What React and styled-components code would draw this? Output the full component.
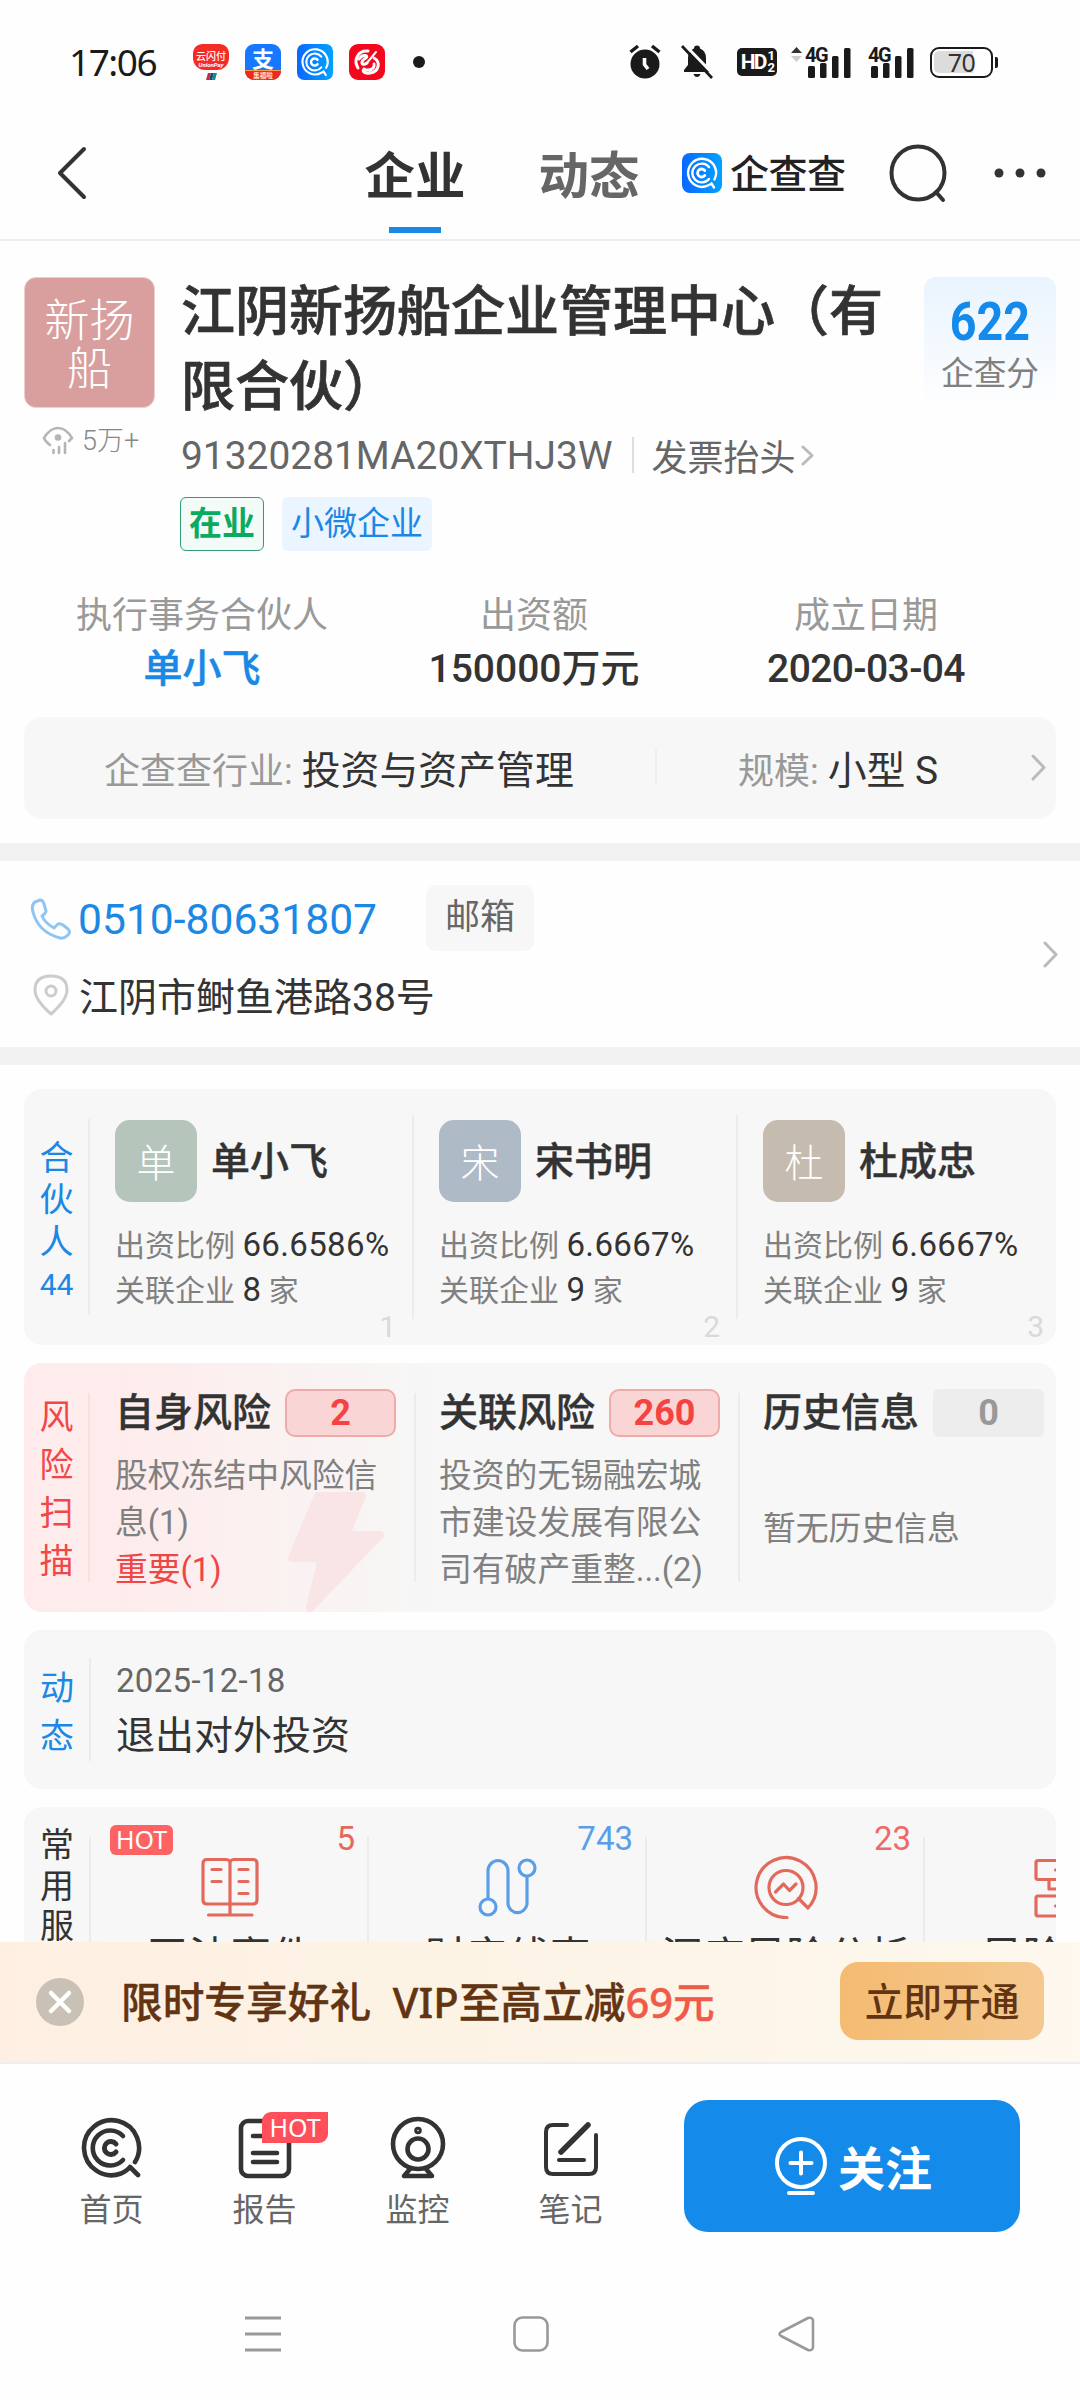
import React from "react";
import styled, { createGlobalStyle } from "styled-components";

const blue = "#1a88e4";
const ink = "#333";

const Global = createGlobalStyle`
  * { box-sizing: border-box; }
  html, body { margin: 0; padding: 0; background: #fff; }
  body { font-family: Roboto, "Noto Sans CJK SC", sans-serif; color: ${ink}; }
  svg { display: block; flex: none; }
`;

const Screen = styled.div`
  width: 1080px;
  height: 2400px;
  display: flex;
  flex-direction: column;
  overflow: hidden;
  background: #fefefe;
`;

/* ---------- status bar ---------- */
const StatusBar = styled.div`
  height: 104px;
  padding: 20px 87px 0 69px;
  display: flex;
  align-items: center;
  justify-content: space-between;
`;
const StatusGroup = styled.div`
  display: flex;
  align-items: center;
  gap: ${(p) => p.$gap || 0}px;
`;
const Clock = styled.div`
  width: 108px;
  font: 400 37px/40px "Noto Sans", Roboto, sans-serif;
  letter-spacing: -1.5px;
  color: #1a1a1a;
`;
const AppIcon = styled.div`
  width: 36px;
  height: 36px;
  border-radius: 9px;
  overflow: hidden;
  display: flex;
  flex-direction: column;
  align-items: center;
  background: ${(p) => p.$bg || "transparent"};
  color: #fff;
`;
const UnionPlate = styled.div`
  width: 36px;
  height: 26px;
  border-radius: 8px 8px 12px 12px;
  background: #f52c26;
  font: 500 10px/11px "Noto Sans CJK SC", sans-serif;
  text-align: center;
  padding-top: 6px;
`;
const UnionSub = styled.div`
  font: italic 700 6px/7px Roboto, sans-serif;
`;
const AliMark = styled.div`
  height: 26px;
  font: 700 22px/26px "Noto Sans CJK SC", sans-serif;
`;
const AliSub = styled.div`
  width: 36px;
  height: 10px;
  background: #ee2a1c;
  border-top: 1px solid #ff9a4a;
  font: 700 6.5px/8px "Noto Sans CJK SC", sans-serif;
  text-align: center;
  color: #ffe9c4;
`;
const Dot = styled.div`
  width: 12px;
  height: 12px;
  margin-left: 12px;
  border-radius: 50%;
  background: #1a1a1a;
`;
const HdBadge = styled.div`
  width: 40px;
  height: 28px;
  margin-left: 22px;
  border-radius: 5px;
  background: #1a1a1a;
  color: #fff;
  display: flex;
  align-items: center;
  justify-content: center;
  font: 700 21px/28px Roboto, sans-serif;
  letter-spacing: -1.8px;
`;
const HdNums = styled.div`
  display: flex;
  flex-direction: column;
  margin-left: 2px;
  font: 700 13px/12px Roboto, sans-serif;
`;
const Signal = styled.div`
  position: relative;
  width: 46px;
  height: 34px;
  margin-left: ${(p) => p.$ml}px;
`;
const SignalTag = styled.span`
  position: absolute;
  left: 0;
  top: 0;
  font: 700 20px/20px Roboto, sans-serif;
  letter-spacing: -1.5px;
  color: #1a1a1a;
`;
const Battery = styled.div`
  width: 63px;
  height: 31px;
  margin-left: 16px;
  border: 2.5px solid #1a1a1a;
  border-radius: 9px;
  padding: 2px;
  position: relative;
  &::before {
    content: "";
    display: block;
    width: 39px;
    height: 22px;
    border-radius: 5px 0 0 5px;
    background: #dcdcdc;
  }
  &::after {
    content: "";
    position: absolute;
    right: -7px;
    top: 8px;
    width: 3px;
    height: 11px;
    border-radius: 0 2px 2px 0;
    background: #1a1a1a;
  }
`;
const BatteryText = styled.span`
  position: absolute;
  inset: 0;
  text-align: center;
  font: 400 25px/26px "Noto Sans", sans-serif;
  letter-spacing: -0.5px;
`;

/* ---------- header ---------- */
const Header = styled.header`
  height: 137px;
  flex: none;
  border-bottom: 2px solid #eee;
  display: flex;
  align-items: flex-start;
  padding: 29px 32px 0 52px;
`;
const BackBox = styled.div`
  width: 312px;
  padding-top: 10px;
`;
const Tab = styled.div`
  width: 102px;
  margin-right: ${(p) => p.$mr || 0}px;
  display: flex;
  flex-direction: column;
  align-items: center;
  font: 700 50.5px/88px Roboto, "Noto Sans CJK SC", sans-serif;
  color: ${(p) => (p.$on ? ink : "#666")};
  white-space: nowrap;
  &::after {
    content: "";
    width: 52px;
    height: 6px;
    margin-top: 6px;
    background: ${(p) => (p.$on ? blue : "transparent")};
  }
`;
const Brand = styled.div`
  display: flex;
  align-items: center;
  height: 80px;
  margin-left: 42px;
  gap: 8px;
  font: 500 39px/76px "Noto Sans CJK SC", sans-serif;
  letter-spacing: -0.5px;
  color: #222;
`;
const BrandName = styled.span`
  margin-top: -4px;
`;
const HeadIcons = styled.div`
  display: flex;
  align-items: center;
  height: 80px;
  margin-left: auto;
  gap: 44px;
`;

/* ---------- scroll area ---------- */
const Content = styled.main`
  height: 1701px;
  flex: none;
  overflow: hidden;
`;
const Company = styled.section`
  padding: 36px 24px 0;
  height: 232px;
  display: flex;
`;
const LogoCol = styled.div`
  width: 131px;
  height: 200px;
`;
const CompanyLogo = styled.div`
  height: 131px;
  border-radius: 12px;
  border: 1px solid #ecd0d0;
  background: #d99f9f;
  color: #fff;
  padding: 16px 18px 0;
  text-align: center;
  font: 300 45px/48px "Noto Sans CJK SC", sans-serif;
`;
const Views = styled.div`
  display: flex;
  align-items: center;
  gap: 8px;
  margin: 15px 0 0 18px;
  font-weight: 300;
  font-size: 27px;
  line-height: 36px;
  color: #888;
  white-space: nowrap;
`;
const Info = styled.div`
  width: 730px;
  margin-left: 26px;
`;
const Name = styled.h1`
  margin: -2px 0 0;
  font-weight: 500;
  font-size: 54px;
  line-height: 75px;
  color: ${ink};
  -webkit-text-stroke: 0.7px ${ink};
`;
const CodeRow = styled.div`
  display: flex;
  align-items: center;
  height: 46px;
  margin-top: 7px;
  font-size: 38.9px;
  color: #666;
`;
const Vline = styled.div`
  width: 2px;
  height: ${(p) => p.$h}px;
  background: ${(p) => p.$c || "#ececec"};
  margin: ${(p) => p.$m || 0};
  flex: none;
`;
const Invoice = styled.span`
  font-size: 36px;
  margin-right: 6px;
`;
const Tags = styled.div`
  display: flex;
  gap: 18px;
  margin: 19px 0 0 -1px;
`;
const Tag = styled.div`
  height: 54px;
  padding: 0 ${(p) => (p.$green ? 8 : 9)}px;
  border-radius: 6px;
  border: ${(p) => (p.$green ? "1.5px solid #2f9d70" : "0")};
  background: ${(p) => (p.$green ? "#f3fbf8" : "#ebf5ff")};
  color: ${(p) => (p.$green ? "#0aaa60" : blue)};
  font-weight: ${(p) => (p.$green ? 700 : 400)};
  font-size: 33px;
  line-height: ${(p) => (p.$green ? 51 : 54)}px;
`;
const Score = styled.div`
  width: 132px;
  height: 132px;
  margin-left: auto;
  border-radius: 12px;
  background: linear-gradient(#e9f4ff, #fefefe);
  text-align: center;
  color: #808080;
  font-size: 32.7px;
  line-height: 44px;
  padding-top: 15px;
`;
const ScoreNum = styled.div`
  font-weight: 700;
  font-size: 53px;
  line-height: 60px;
  color: #148aeb;
  transform: scaleX(0.88);
`;
const Stats = styled.section`
  display: grid;
  grid-template-columns: repeat(3, 332px);
  padding: 116px 36px 0;
  height: 244px;
  text-align: center;
`;
const StatLabel = styled.div`
  font-size: 36px;
  line-height: 54px;
  color: #999;
`;
const StatValue = styled.div`
  font-weight: 500;
  font-size: 39px;
  line-height: 52px;
  color: ${(p) => (p.$link ? blue : ink)};
  letter-spacing: ${(p) => p.$ls || 0}px;
  -webkit-text-stroke: ${(p) => (p.$link ? 0.5 : 0)}px currentColor;
`;
const Industry = styled.section`
  margin: 0 24px;
  height: 102px;
  border-radius: 18px;
  background: #f7f7f7;
  display: flex;
  align-items: center;
  padding: 0 10px 2px 80px;
  color: #999;
  font-size: 36px;
  white-space: pre;
  b { font-weight: 400; font-size: 38.9px; color: ${ink}; }
`;
const Pair = styled.div`
  width: ${(p) => p.$w}px;
`;
const Band = styled.div`
  height: 18px;
  margin-top: ${(p) => p.$mt || 0}px;
  background: #f2f2f2;
`;
const Contact = styled.section`
  height: 186px;
  display: flex;
  align-items: center;
  justify-content: space-between;
  padding: 0 22px 0 30px;
`;
const ContactLines = styled.div`
  display: flex;
  flex-direction: column;
  gap: 16px;
`;
const ContactRow = styled.div`
  display: flex;
  align-items: center;
  gap: ${(p) => (p.$phone ? 7 : 8)}px;
  height: ${(p) => p.$h}px;
  font-size: ${(p) => (p.$phone ? 42.6 : 39)}px;
  color: ${(p) => (p.$phone ? blue : ink)};
`;
const Mail = styled.div`
  margin-left: 42px;
  width: 108px;
  height: 66px;
  border-radius: 10px;
  background: #f7f7f7;
  color: #666;
  font-size: 35px;
  line-height: 65px;
  text-align: center;
  margin-top: -2px;
`;

/* ---------- cards ---------- */
const Card = styled.section`
  margin: ${(p) => p.$mt}px 24px 0;
  height: ${(p) => p.$h}px;
  border-radius: 18px;
  overflow: hidden;
  background: ${(p) => (p.$risk ? "linear-gradient(90deg, #ffebeb 0%, #feecec 10%, #f7f7f7 40%)" : "#f7f7f7")};
  display: flex;
  align-items: stretch;
  position: relative;
`;
const Side = styled.div`
  width: ${(p) => p.$w || 66}px;
  flex: none;
  margin: ${(p) => p.$my}px 0;
  border-right: 2px solid ${(p) => p.$line || "#ececec"};
  padding: ${(p) => p.$pt || 0}px 14px 0 15px;
  text-align: center;
  font-size: 34px;
  line-height: ${(p) => p.$lh}px;
  color: ${(p) => p.$c || blue};
`;
const SideShift = styled.div`
  margin: -12px 0 0;
`;
const SideNum = styled.div`
  font-size: 30px;
  line-height: 44px;
`;
const Partner = styled.div`
  width: 324px;
  flex: none;
  padding: 31px 0 0 25px;
  position: relative;
`;
const EdgeLine = styled.div`
  width: 2px;
  margin: ${(p) => p.$my}px ${(p) => -(p.$dx || 0)}px ${(p) => p.$my}px ${(p) => (p.$dx || 0) - 2}px;
  background: #ececec;
  flex: none;
`;
const PersonHead = styled.div`
  display: flex;
  align-items: center;
  gap: 14px;
  height: 82px;
  font-weight: 500;
  font-size: 39px;
  line-height: 85px;
  -webkit-text-stroke: 0.4px ${ink};
  span { height: 82px; }
`;
const Avatar = styled.div`
  width: 82px;
  height: 82px;
  border-radius: 15px;
  background: ${(p) => p.$bg};
  color: #fff;
  text-align: center;
  font: 300 39px/80px "Noto Sans CJK SC", sans-serif;
  -webkit-text-stroke: 0;
`;
const Fact = styled.div`
  margin-top: ${(p) => p.$mt || 0}px;
  font-size: 30px;
  line-height: 44px;
  color: #808080;
  white-space: pre;
  b { font-weight: 400; font-size: 33px; color: ${ink}; letter-spacing: 0.35px; }
`;
const Rank = styled.div`
  position: absolute;
  right: 18px;
  bottom: 0;
  font-size: 30px;
  line-height: 36px;
  color: #d9d9d9;
`;
const Bolt = styled.svg`
  position: absolute;
  left: 264px;
  top: 129px;
`;
const Risk = styled.div`
  width: 324px;
  flex: none;
  padding: 26px 12px 0 25px;
  position: relative;
`;
const RiskHead = styled.div`
  display: flex;
  align-items: center;
  justify-content: space-between;
  font-weight: 500;
  font-size: 39px;
  height: 48px;
  line-height: 50px;
  white-space: nowrap;
  -webkit-text-stroke: 0.4px ${ink};
`;
const Count = styled.div`
  width: 111px;
  height: 48px;
  margin-right: 6px;
  border-radius: ${(p) => (p.$off ? 6 : 10)}px;
  border: ${(p) => (p.$off ? 0 : 2)}px solid #efaaaa;
  background: ${(p) => (p.$off ? "#ededed" : "#fad5d5")};
  color: ${(p) => (p.$off ? "#999" : "#f54343")};
  font-weight: 700;
  font-size: 36px;
  line-height: ${(p) => (p.$off ? 48 : 44)}px;
  text-align: center;
  -webkit-text-stroke: 0;
`;
const RiskText = styled.div`
  width: 272px;
  margin-top: ${(p) => p.$mt}px;
  font-size: 32.8px;
  line-height: 47px;
  color: #808080;
  em { font-style: normal; color: #f04545; }
`;
const News = styled.div`
  padding: 26px 0 0 25px;
  font-size: 39px;
  line-height: 60px;
`;
const NewsDate = styled.div`
  font-size: 33px;
  line-height: 50px;
  letter-spacing: 0.3px;
  color: #666;
`;
const Service = styled.div`
  width: 278px;
  flex: none;
  height: 180px;
  position: relative;
  display: flex;
  flex-direction: column;
  align-items: center;
  padding-top: 48px;
`;
const ServiceName = styled.div`
  margin-top: 13px;
  font-size: 41.5px;
  line-height: 52px;
  white-space: nowrap;
`;
const ServiceCount = styled.div`
  position: absolute;
  right: 14px;
  top: 11px;
  font-size: 33px;
  line-height: 42px;
  color: ${(p) => p.$c};
`;
const Hot = styled.div`
  position: absolute;
  left: 19px;
  top: 18px;
  width: 63px;
  height: 30px;
  border-radius: 6px;
  background: #ff6262;
  color: #fff;
  text-align: center;
  font: 400 25px/29px "Noto Sans", sans-serif;
`;

/* ---------- promo + bottom bar ---------- */
const Promo = styled.section`
  height: 122px;
  flex: none;
  display: flex;
  align-items: center;
  padding: 0 36px;
  border-bottom: 2px solid #eee;
  background: linear-gradient(90deg, #feefe2, #fcf3e5 40%, #fef8ee);
  color: #633411;
  font: 500 41.7px/58px "Noto Sans", "Noto Sans CJK SC", sans-serif;
  white-space: pre;
`;
const PromoText = styled.div`
  margin-left: 37px;
  -webkit-text-stroke: 0.4px currentColor;
  b { font-weight: 500; color: #f05a48; }
`;
const OpenBtn = styled.div`
  width: 204px;
  height: 78px;
  margin: 0 0 2px auto;
  border-radius: 18px;
  background: linear-gradient(90deg, #f4bb72, #f4c990);
  text-align: center;
  font-size: 38.7px;
  line-height: 78px;
`;
const BottomBar = styled.nav`
  height: 196px;
  flex: none;
  display: flex;
  padding-left: 35px;
`;
const NavItem = styled.div`
  width: 153px;
  position: relative;
  padding-top: 51px;
  display: flex;
  flex-direction: column;
  align-items: center;
  font-size: 32px;
  line-height: 44px;
  color: #666;
  svg { margin-bottom: 9px; }
`;
const NavHot = styled.div`
  position: absolute;
  left: 74px;
  top: 48px;
  width: 66px;
  height: 31px;
  border-radius: 9px 0 9px 0;
  background: #ff4f5b;
  color: #fff;
  text-align: center;
  font: 400 25px/31px "Noto Sans", sans-serif;
`;
const Follow = styled.div`
  width: 336px;
  height: 132px;
  margin: 36px 0 0 37px;
  border-radius: 24px;
  background: #148aeb;
  color: #fff;
  display: flex;
  align-items: center;
  justify-content: center;
  gap: 10px;
  padding: 0 0 1px 2px;
  font-weight: 700;
  font-size: 47px;
`;
const SystemNav = styled.div`
  height: 140px;
  display: flex;
  align-items: center;
  padding: 8px 0 0 245px;
`;
const NavGap = styled.div`
  width: ${(p) => p.$w}px;
`;

const Chevron = ({ w = 15, h = 27, s = 3, c = "#bbb" }) => (
  <svg width={w} height={h} fill="none" stroke={c} strokeWidth={s} strokeLinecap="round" strokeLinejoin="round">
    <path d={`M2 2L${w - 2} ${h / 2}L2 ${h - 2}`} />
  </svg>
);

const QccMark = ({ size }) => (
  <svg width={size} height={size} viewBox="0 0 40 40">
    <defs>
      <linearGradient id="qcc" x1="0" x2="1">
        <stop offset="0" stopColor="#0a68ff" />
        <stop offset="1" stopColor="#00a2ff" />
      </linearGradient>
    </defs>
    <rect width="40" height="40" rx="8" fill="url(#qcc)" />
    <g fill="none" stroke="#fff" strokeWidth="2.4" strokeLinecap="round">
      <path d="M32.4 26.5A14 14 0 1 0 27 32Q29 31 29.500 30.500L32 34.500" />
      <path d="M27 14A9.4 9.4 0 1 0 27 26" />
      <path d="M22.8 17.6A4 4 0 1 0 22.8 22.4" strokeWidth="2.8" />
    </g>
  </svg>
);

const Bars = () => (
  <svg width="46" height="34" fill="#1a1a1a">
    <rect x="3" y="21" width="7" height="12" rx="1.5" />
    <rect x="15" y="18" width="6.5" height="15" rx="1.5" />
    <rect x="27" y="11" width="6.5" height="22" rx="1.5" />
    <rect x="39" y="3" width="6.5" height="30" rx="1.5" />
  </svg>
);

const BookIcon = () => (
  <svg width="60" height="64" viewBox="0 0 60 64" fill="none" stroke="#e2695c" strokeWidth="3.2" strokeLinecap="round" strokeLinejoin="round">
    <path d="M30 7Q29 4.500 26 4.500H7Q3 4.500 3 8.500V45Q3 49 7 49H53Q57 49 57 45V8.500Q57 4.500 53 4.500H34Q31 4.500 30 7V59M8.500 60H52" />
    <path d="M12 14.500H21M12 26.500H21M39 14.500H48M39 26.500H48M39 38.500H48" />
  </svg>
);
const RouteIcon = () => (
  <svg width="60" height="64" viewBox="0 0 60 64" fill="none" stroke="#5b9ee8" strokeWidth="3.2">
    <circle cx="10" cy="52" r="8" />
    <circle cx="49" cy="13" r="8" />
    <path d="M10 44V16A10 10.500 0 0 1 30 16V49.500A9.750 10.500 0 0 0 49 49.500V21" />
  </svg>
);
const AnalysisIcon = () => (
  <svg width="66" height="64" viewBox="0 0 66 64" fill="none" stroke="#e2695c" strokeWidth="3.2" strokeLinecap="round" strokeLinejoin="round">
    <path d="M34 62.500A30 30 0 1 1 55 53L45.500 43.500" />
    <circle cx="33" cy="32.500" r="17" />
    <path d="M22.500 37L30.500 29L36.500 35.500L43 29" />
  </svg>
);
const RelationIcon = () => (
  <svg width="60" height="64" viewBox="0 0 60 64" fill="none" stroke="#e2695c" strokeWidth="3.2" strokeLinecap="round" strokeLinejoin="round">
    <rect x="2" y="5.500" width="38" height="19" rx="2" />
    <rect x="2" y="41" width="38" height="20" rx="2" />
    <path d="M15 24.500V34H44V42M21.500 15H22M21.500 51H22" />
  </svg>
);

const partners = [
  { ch: "单", name: "单小飞", rate: "66.6586%", n: 8, bg: "#b5c5bc" },
  { ch: "宋", name: "宋书明", rate: "6.6667%", n: 9, bg: "#afbac7" },
  { ch: "杜", name: "杜成忠", rate: "6.6667%", n: 9, bg: "#c5bbae" },
];

const services = [
  { name: "司法案件", count: "5", c: "#e2695c", Icon: BookIcon, hot: true },
  { name: "财产线索", count: "743", c: "#5b9ee8", Icon: RouteIcon },
  { name: "深度风险分析", count: "23", c: "#ec6a68", Icon: AnalysisIcon },
  { name: "风险关系", count: "", c: "#e2695c", Icon: RelationIcon },
];

const navIcon = { width: 64, height: 64, fill: "none", stroke: ink, strokeWidth: 4.6, strokeLinecap: "round", strokeLinejoin: "round" };

export default function App() {
  return (
    <Screen>
      <Global />
      <StatusBar>
        <StatusGroup $gap={16}>
          <Clock>17:06</Clock>
          <AppIcon>
            <UnionPlate>云闪付<UnionSub>UnionPay</UnionSub></UnionPlate>
            <svg width="12" height="10"><path d="M3 3H6L4 10H1Z" fill="#d3263a" /><path d="M6 3H9L7 10H4Z" fill="#124a82" /><path d="M9 3H12L10 10H7Z" fill="#0b8d8a" /></svg>
          </AppIcon>
          <AppIcon $bg="#1777ff"><AliMark>支</AliMark><AliSub>集福啦</AliSub></AppIcon>
          <QccMark size={36} />
          <AppIcon $bg="#f5061c">
            <svg width="36" height="36" fill="none" stroke="#fff" strokeLinecap="round">
              <path d="M19 7C9 6 4 16 9 24" strokeWidth="3" />
              <path d="M10 15C14 9 20 12 17 14C11 17 12 23 18 19" strokeWidth="3" />
              <path d="M27 8L17 20" strokeWidth="2" />
              <path d="M25 14C32 18 30 28 21 29C15 30 13 27 15 25C19 27 26 26 25 20" strokeWidth="3" />
            </svg>
          </AppIcon>
          <Dot />
        </StatusGroup>
        <StatusGroup>
          <svg width="32" height="36">
            <circle cx="16" cy="20" r="14.500" fill="#1a1a1a" />
            <path d="M1.500 8L9 2M23 2L30.500 8" stroke="#1a1a1a" strokeWidth="3.500" />
            <path d="M15.500 14V20.500L19 25" stroke="#fff" strokeWidth="3.600" fill="none" />
          </svg>
          <svg width="54" height="36" viewBox="-20 0 54 36">
            <path d="M16 1.500Q19 1.500 19 4.500Q25 7 25 14V21L29 26V28H3V26L7 21V14Q7 7 13 4.500Q13 1.500 16 1.500ZM12.500 30H19.500Q18.500 33 16 33T12.500 30" fill="#1a1a1a" />
            <path d="M2 -1L34 32" stroke="#fefefe" strokeWidth="3" />
            <path d="M1 2L31 34" stroke="#1a1a1a" strokeWidth="2.800" />
          </svg>
          <HdBadge>HD<HdNums><span>1</span><span>2</span></HdNums></HdBadge>
          <svg width="25" height="34" viewBox="-14 0 25 34">
            <path d="M0 8L5.500 2L11 8Z" fill="#333" />
            <path d="M0 11L5.500 17L11 11Z" fill="#ccc" />
          </svg>
          <Signal $ml={3}><Bars /><SignalTag>4G</SignalTag></Signal>
          <Signal $ml={17}><Bars /><SignalTag>4G</SignalTag></Signal>
          <Battery><BatteryText>70</BatteryText></Battery>
        </StatusGroup>
      </StatusBar>

      <Header>
        <BackBox>
          <svg width="40" height="60" fill="none" stroke={ink} strokeWidth="4" strokeLinecap="round" strokeLinejoin="round">
            <path d="M32 6L8 30L32 54" />
          </svg>
        </BackBox>
        <Tab $on $mr={72}>企业</Tab>
        <Tab>动态</Tab>
        <Brand><QccMark size={40} /><BrandName>企查查</BrandName></Brand>
        <HeadIcons>
          <svg width="62" height="62" fill="none" stroke={ink} strokeWidth="4" strokeLinecap="round">
            <circle cx="32" cy="31" r="26.500" />
            <path d="M50 50L57 58" />
          </svg>
          <svg width="56" height="12" fill={ink}>
            <circle cx="7" cy="6" r="4.500" /><circle cx="28" cy="6" r="4.500" /><circle cx="49" cy="6" r="4.500" />
          </svg>
        </HeadIcons>
      </Header>

      <Content>
        <Company>
          <LogoCol>
            <CompanyLogo>新扬船</CompanyLogo>
            <Views>
              <svg width="32" height="30" fill="none" stroke="#b5b5b5" strokeWidth="2.600" strokeLinecap="round">
                <path d="M8 19Q3 15 2 12Q8 2 16 2T30 12L27 15" />
                <circle cx="16" cy="11.500" r="2" fill="#b5b5b5" />
                <path d="M11.500 24V27M17 21V27M23 17V27" />
              </svg>
              5万+
            </Views>
          </LogoCol>
          <Info>
            <Name>江阴新扬船企业管理中心（有限合伙）</Name>
            <CodeRow>
              91320281MA20XTHJ3W
              <Vline $h={36} $c="#ddd" $m="0 17px 0 20px" />
              <Invoice>发票抬头</Invoice>
              <Chevron w={13} h={21} />
            </CodeRow>
            <Tags><Tag $green>在业</Tag><Tag>小微企业</Tag></Tags>
          </Info>
          <Score><ScoreNum>622</ScoreNum>企查分</Score>
        </Company>
        <Stats>
          <div><StatLabel>执行事务合伙人</StatLabel><StatValue $link>单小飞</StatValue></div>
          <div><StatLabel>出资额</StatLabel><StatValue>150000万元</StatValue></div>
          <div><StatLabel>成立日期</StatLabel><StatValue $ls={-0.6}>2020-03-04</StatValue></div>
        </Stats>
        <Industry>
          <Pair $w={551}>企查查行业: <b>投资与资产管理</b></Pair>
          <Vline $h={36} $m="0 81px 0 0" $c="#efefef" />
          <Pair $w={293}>规模: <b>小型 S</b></Pair>
          <Chevron />
        </Industry>
        <Band $mt={24} />
        <Contact>
          <ContactLines>
            <ContactRow $phone $h={64}>
              <svg width="41" height="42" fill="none" stroke="#8fc5f3" strokeWidth="3" strokeLinejoin="round">
                <path d="M5 4L10 2Q13 2 14 6L16 13Q16 15 12 18Q15 25 24 30L28 26Q30 25 33 27L38 31Q41 34 38 37Q34 41 30 40Q8 34 3 14Q1 7 5 4Z" />
              </svg>
              0510-80631807
              <Mail>邮箱</Mail>
            </ContactRow>
            <ContactRow $h={54}>
              <svg width="41" height="44" viewBox="0 -2 41 44" fill="none" stroke="#ccc" strokeWidth="3">
                <path d="M21 40Q5 26 5 16Q5 2 21 2T37 16Q37 26 21 40Z" strokeLinejoin="round" />
                <circle cx="21" cy="17" r="5" />
              </svg>
              江阴市鲥鱼港路38号
            </ContactRow>
          </ContactLines>
          <Chevron />
        </Contact>
        <Band />

        <Card $mt={24} $h={256}>
          <Side $my={30} $pt={18} $lh={42}>合伙人<SideNum>44</SideNum></Side>
          {partners.map((p, i) => (
            <React.Fragment key={p.name}>
              <Partner>
                <PersonHead><Avatar $bg={p.bg}>{p.ch}</Avatar><span>{p.name}</span></PersonHead>
                <Fact $mt={21}>出资比例 <b>{p.rate}</b></Fact>
                <Fact>关联企业 <b>{p.n}</b> 家</Fact>
                <Rank>{i + 1}</Rank>
              </Partner>
              {i < 2 && <EdgeLine $my={26} />}
            </React.Fragment>
          ))}
        </Card>

        <Card $mt={18} $h={249} $risk>
          <Side $my={30} $lh={48} $c="#f04848" $line="#fbdede">风险扫描</Side>
          <Bolt width="98" height="120" fill="#f9e5e5" stroke="#f9e5e5" strokeWidth="8" strokeLinejoin="round">
            <path d="M30 4H74L58 43H92L22 116L34 66H4Z" />
          </Bolt>
          <Risk>
            <RiskHead>自身风险<Count>2</Count></RiskHead>
            <RiskText $mt={16}>股权冻结中风险信息(1)<br /><em>重要(1)</em></RiskText>
          </Risk>
          <EdgeLine $my={30} $dx={2} />
          <Risk>
            <RiskHead>关联风险<Count>260</Count></RiskHead>
            <RiskText $mt={16}>投资的无锡融宏城市建设发展有限公司有破产重整...(2)</RiskText>
          </Risk>
          <EdgeLine $my={30} $dx={2} />
          <Risk>
            <RiskHead>历史信息<Count $off>0</Count></RiskHead>
            <RiskText $mt={69}>暂无历史信息</RiskText>
          </Risk>
        </Card>

        <Card $mt={18} $h={159}>
          <Side $w={67} $my={28} $pt={6} $lh={48}>动态</Side>
          <News><NewsDate>2025-12-18</NewsDate>退出对外投资</News>
        </Card>

        <Card $mt={18} $h={240}>
          <Side $w={67} $my={30} $lh={40.5} $c={ink}><SideShift>常用服务</SideShift></Side>
          {services.map((s, i) => (
            <React.Fragment key={s.name}>
              <Service>
                {s.hot && <Hot>HOT</Hot>}
                <ServiceCount $c={s.c}>{s.count}</ServiceCount>
                <s.Icon />
                <ServiceName>{s.name}</ServiceName>
              </Service>
              {i < 3 && <EdgeLine $my={30} />}
            </React.Fragment>
          ))}
        </Card>
      </Content>

      <Promo>
        <svg width="48" height="48">
          <circle cx="24" cy="24" r="24" fill="#c9c1b6" />
          <path d="M15 15L33 33M33 15L15 33" stroke="#fff" strokeWidth="4.500" strokeLinecap="round" />
        </svg>
        <PromoText>限时专享好礼  VIP至高立减<b>69元</b></PromoText>
        <OpenBtn>立即开通</OpenBtn>
      </Promo>

      <BottomBar>
        <NavItem>
          <svg {...navIcon}>
            <path d="M55 47A27.500 27.500 0 1 0 41 58.500Q48 55 50 52L58 60" />
            <path d="M43 21A17.500 17.500 0 1 0 43 45" />
            <path d="M36 29A6.500 6.500 0 1 0 36 37" strokeWidth="5" />
          </svg>
          首页
        </NavItem>
        <NavItem>
          <svg {...navIcon}>
            <rect x="8" y="6" width="48" height="55" rx="7" />
            <path d="M20 21H40M20 38H44M20 47H44" />
          </svg>
          报告
          <NavHot>HOT</NavHot>
        </NavItem>
        <NavItem>
          <svg {...navIcon}>
            <circle cx="32" cy="29" r="25" />
            <circle cx="32" cy="34" r="10.500" />
            <circle cx="32" cy="15.500" r="1.500" />
            <path d="M24 54L18 61H46L40 54" />
          </svg>
          监控
        </NavItem>
        <NavItem>
          <svg {...navIcon} strokeWidth="4">
            <path d="M28 10H14Q7 10 7 17V52Q7 59 14 59H50Q57 59 57 52V20" />
            <path d="M22 37L49 10" strokeWidth="5.500" />
            <path d="M20 45H45" />
          </svg>
          笔记
        </NavItem>
        <Follow>
          <svg width="54" height="62" fill="none" stroke="#fff" strokeWidth="4" strokeLinecap="round">
            <circle cx="27" cy="28" r="24" />
            <path d="M16.500 28H37.500M27 17.500V38.500M15 58H39" />
          </svg>
          关注
        </Follow>
      </BottomBar>
      <SystemNav>
        <svg width="36" height="36" stroke="#999" strokeWidth="3">
          <path d="M0 2H36M0 18H36M0 34H36" />
        </svg>
        <NavGap $w={232} />
        <svg width="36" height="36" fill="none" stroke="#999" strokeWidth="2.600">
          <rect x="1.500" y="1.500" width="33" height="33" rx="8" />
        </svg>
        <NavGap $w={229} />
        <svg width="38" height="36" fill="none" stroke="#999" strokeWidth="2.600" strokeLinejoin="round">
          <path d="M3 16L30 2Q35 1 35 5V31Q35 35 30 34L3 20Q0 18 3 16Z" />
        </svg>
      </SystemNav>
    </Screen>
  );
}
